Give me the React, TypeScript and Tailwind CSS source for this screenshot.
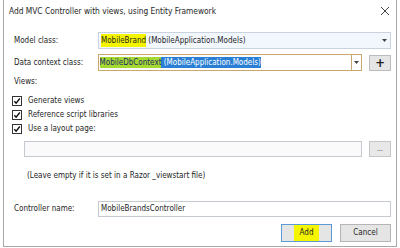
import React from "react";

const font = { fontFamily: '"DejaVu Sans Condensed", "Liberation Sans Narrow", "Lato", sans-serif' };

function Check({ label }: { label: string }) {
  return (
    <div className="flex items-center gap-[6px] h-[14px]">
      <span className="w-[10px] h-[10px] border border-[#333] bg-white flex items-center justify-center">
        <svg width="8" height="8" viewBox="0 0 8 8">
          <path d="M1.3 4.3 L3.1 6.1 L6.8 1.5" fill="none" stroke="#111" strokeWidth="1.4" />
        </svg>
      </span>
      <span>{label}</span>
    </div>
  );
}

function Arrow() {
  return (
    <svg width="5" height="3" viewBox="0 0 5 3">
      <path d="M0 0 H5 L2.5 3 Z" fill="#444" />
    </svg>
  );
}

export default function App() {
  return (
    <div className="w-[400px] h-[248px] bg-white text-[8px] text-[#1e1e1e] whitespace-nowrap" style={font}>
      <div className="ml-[3px] w-[394px] h-[247px] border-l border-r border-b border-[#a8a8a8] flex flex-col">
        <div className="flex items-center justify-between h-[22px] pl-[5px] pr-[6px]">
          <span className="text-[8.3px]">Add MVC Controller with views, using Entity Framework</span>
          <svg width="10" height="10" viewBox="0 0 10 10">
            <path d="M1 1 L9 9 M9 1 L1 9" stroke="#444" strokeWidth="1" />
          </svg>
        </div>

        <div className="flex flex-col pl-[10px] pr-[5px] pt-[10px]">
          <div className="flex items-center h-[17px]">
            <span className="w-[84px]">Model class:</span>
            <div className="flex-1 h-[17px] border border-[#c9d2de] bg-[#f2f6fd] flex items-center pl-[2px] pr-[3px]">
              <span className="flex-1">
                <span className="bg-[#f5f500] py-[2px]">MobileBrand</span> (MobileApplication.Models)
              </span>
              <Arrow />
            </div>
          </div>

          <div className="flex items-center h-[17px] mt-[5px]">
            <span className="w-[84px]">Data context class:</span>
            <div className="w-[266px] h-[17px] border border-[#c8a870] bg-white flex items-center pl-[1px]">
              <span className="flex-1">
                <span className="bg-[#2a7fd4] py-[1px]">
                  <span className="bg-[#a6d832] text-[#1c2f66] py-[1px]">MobileDbContext</span>
                  <span className="text-white"> (MobileApplication.Models)</span>
                </span>
              </span>
              <span className="w-[10px] h-full border-l border-[#c8a870] flex items-center justify-center">
                <Arrow />
              </span>
            </div>
            <span className="ml-[7px] w-[22px] h-[16px] border border-[#bcbcbc] bg-[#e5e5e5] flex items-center justify-center text-[13px] leading-none font-bold">
              +
            </span>
          </div>

          <div className="mt-[4px] h-[14px] flex items-center">Views:</div>
          <div className="ml-[-2px] mt-[5px] flex flex-col">
            <Check label="Generate views" />
            <Check label="Reference script libraries" />
            <Check label="Use a layout page:" />
          </div>

          <div className="flex items-center mt-[5px] ml-[10px]">
            <div className="w-[339px] h-[16px] border border-[#c5c9d0] bg-[#fafafa]" />
            <span className="ml-[7px] w-[22px] h-[16px] border border-[#c5c5c5] bg-[#e8e8e8] flex items-center justify-center text-[7px] leading-none">
              ...
            </span>
          </div>
          <div className="ml-[13px] mt-[12px] h-[14px] flex items-center">
            (Leave empty if it is set in a Razor _viewstart file)
          </div>

          <div className="flex items-center h-[16px] mt-[18px]">
            <span className="w-[84px]">Controller name:</span>
            <div className="flex-1 h-[16px] border border-[#c5c9d0] bg-white flex items-center pl-[2px]">
              MobileBrandsController
            </div>
          </div>

          <div className="flex justify-end gap-[8px] mt-[7px]">
            <span className="w-[51px] h-[18px] border border-[#5b9bd5] bg-[#e5e5e5] flex items-center justify-center">
              <span className="bg-[#f5f500] px-[6px] py-[2px]">Add</span>
            </span>
            <span className="w-[51px] h-[18px] border border-[#b5b5b5] bg-[#e5e5e5] flex items-center justify-center">
              Cancel
            </span>
          </div>
        </div>
      </div>
    </div>
  );
}
